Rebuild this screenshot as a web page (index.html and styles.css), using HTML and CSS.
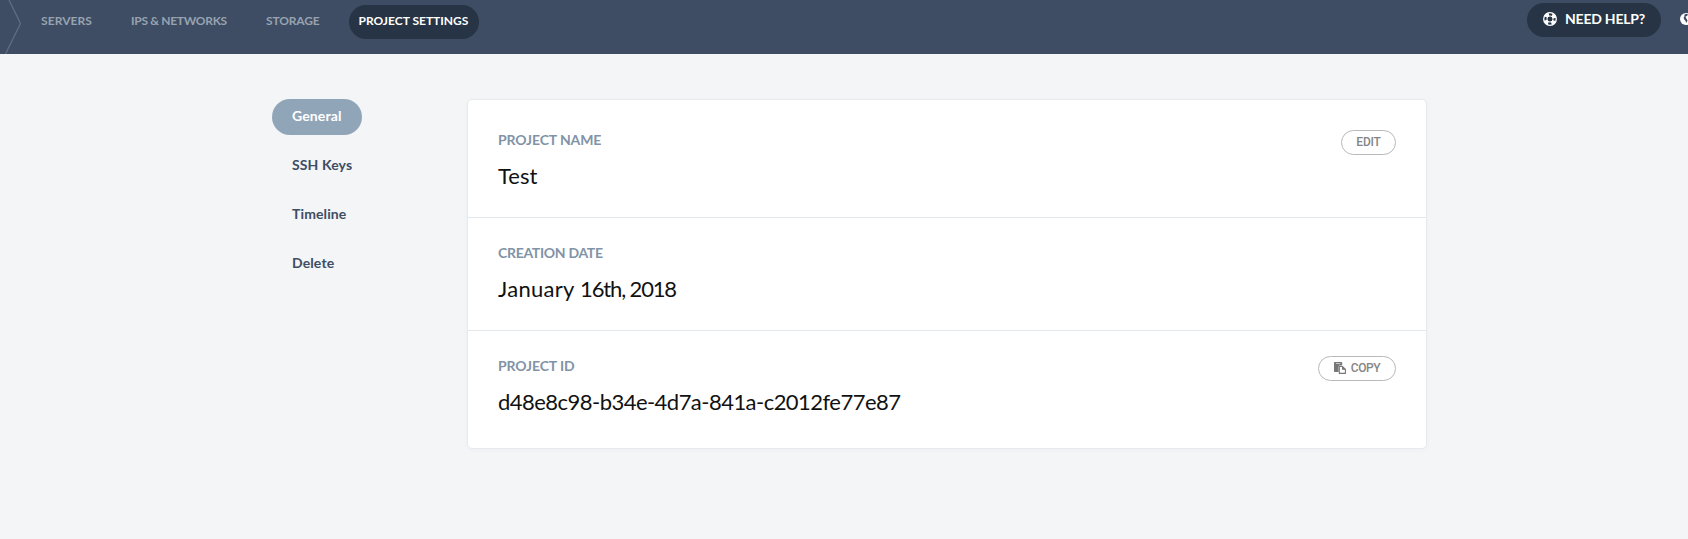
FILE: index.html
```html
<!DOCTYPE html>
<html lang="en">
<head>
<meta charset="utf-8">
<title>Project Settings</title>
<link rel="stylesheet" href="styles.css">
</head>
<body>
<header class="topbar">
  <svg class="chevron" width="22" height="54" viewBox="0 0 22 54"><path d="M9 0L20.500 23.500L5.500 54" fill="none" stroke="#5f6d81" stroke-width="1.300"/></svg>
  <nav class="nav">
    <a class="nav-item servers">SERVERS</a>
    <a class="nav-item networks">IPS &amp; NETWORKS</a>
    <a class="nav-item storage">STORAGE</a>
    <a class="nav-item active">PROJECT SETTINGS</a>
  </nav>
  <a class="help">
    <svg width="14" height="14" viewBox="0 0 14 14"><circle cx="7" cy="7" r="6.300" fill="none" stroke="#fff" stroke-width="1.300"/><circle cx="7" cy="7" r="4.700" fill="none" stroke="#fff" stroke-width="3.800" stroke-dasharray="4 3.383" stroke-dashoffset="-1.691"/><circle cx="7" cy="7" r="3.100" fill="none" stroke="#fff" stroke-width="1"/></svg>
    <span>NEED HELP?</span>
  </a>
  <svg class="globe" width="12" height="12" viewBox="0 0 12 12"><circle cx="6" cy="6" r="6" fill="#fff"/><path d="M4.500 1.500L6.500 .8L8 1.500L7 3L5.500 3.600L6 5L7.600 7.600L6.200 10L5.600 8L4.200 6.400L3.600 4.600L4.400 3.600Z" fill="#3e4d63"/></svg>
</header>
<main class="page">
  <aside class="side">
    <a class="side-item selected">General</a>
    <a class="side-item">SSH Keys</a>
    <a class="side-item">Timeline</a>
    <a class="side-item">Delete</a>
  </aside>
  <section class="card">
    <div class="row">
      <div><h2 class="label">PROJECT NAME</h2><p class="value">Test</p></div>
      <button class="btn">EDIT</button>
    </div>
    <div class="row">
      <div><h2 class="label created">CREATION DATE</h2><p class="value date"><span class="month">January </span>16th, 2018</p></div>
    </div>
    <div class="row">
      <div><h2 class="label">PROJECT ID</h2><p class="value uuid">d48e8c98-b34e-4d7a-841a-c2012fe77e87</p></div>
      <button class="btn copy"><svg width="12" height="12" viewBox="0 0 12 12"><path d="M.7 0H7.500Q8.200 0 8.200 .7V3.400H5.600Q4.600 3.400 4.600 4.400V10H.7Q0 10 0 9.300V.7Q0 0 .7 0Z" fill="#777"/><path d="M2 1.500H6.300" stroke="#fff" stroke-width=".6"/><path d="M5.300 4.500H8.500L11.400 7.300V11.400H5.300Z" fill="#fff" stroke="#777" stroke-width="1.100"/><path d="M8 4V7.800H11.900Z" fill="#777"/></svg><span>COPY</span></button>
    </div>
  </section>
</main>
</body>
</html>
```
FILE: styles.css
```css
* { box-sizing: border-box; }
body {
  margin: 0;
  height: 539px;
  overflow: hidden;
  background: #f3f5f7;
  font-family: Lato, "Open Sans", sans-serif;
}
.topbar {
  display: flex;
  align-items: flex-start;
  height: 54px;
  overflow: hidden;
  background: #3e4d63;
}
.chevron { flex: none; }
.nav { display: flex; flex: 1; padding: 5px 0 0 9px; }
.nav-item {
  height: 34px;
  padding: 0 10px;
  border-radius: 17px;
  color: #97a3b1;
  font-size: 12px;
  font-weight: 700;
  line-height: 32px;
  white-space: nowrap;
}
.servers { width: 90px; letter-spacing: .08px; }
.networks { width: 135px; letter-spacing: -.3px; }
.storage { width: 93px; letter-spacing: -.15px; }
.active { width: 130px; padding-left: 9.500px; background: #263445; color: #fff; }
.help {
  display: flex;
  gap: 8px;
  width: 134px;
  height: 34px;
  margin-top: 3px;
  padding-left: 16px;
  border-radius: 17px;
  background: #263445;
  color: #fff;
  font-size: 14px;
  font-weight: 700;
  letter-spacing: -.22px;
  line-height: 32px;
  white-space: nowrap;
}
.help svg { flex: none; margin-top: 9px; }
.globe { flex: none; margin: 13px -4px 0 19px; }
.page {
  display: flex;
  align-items: flex-start;
  padding: 45px 0 0 272px;
}
.side {
  display: flex;
  flex-direction: column;
  align-items: flex-start;
  gap: 13px;
  width: 195px;
}
.side-item {
  height: 36px;
  padding: 0 20px;
  border-radius: 18px;
  color: #3e4d63;
  font-size: 14px;
  font-weight: 700;
  letter-spacing: .12px;
  line-height: 33px;
  white-space: nowrap;
}
.selected { width: 90px; background: #91a5b9; color: #fff; }
.card {
  width: 960px;
  height: 350px;
  border: 1px solid #e6eaee;
  border-radius: 5px;
  background: #fff;
  box-shadow: 0 1px 5px rgba(100, 120, 140, .04);
}
.row {
  display: flex;
  justify-content: space-between;
  align-items: flex-start;
  height: 113px;
  padding: 30px 30px 0;
}
.row:first-child { height: 117px; }
.row + .row { border-top: 1px solid #e3e8ec; padding-top: 25px; }
.label {
  margin: -1px 0 0;
  color: #8193a6;
  font-size: 14px;
  font-weight: 700;
  letter-spacing: -.12px;
  line-height: 22px;
  white-space: nowrap;
}
.created { letter-spacing: -.3px; }
.value {
  margin: 11px 0 0;
  color: #111;
  font-size: 22px;
  font-weight: 400;
  line-height: 28px;
  white-space: nowrap;
}
.date { letter-spacing: -1.15px; }
.month { letter-spacing: .3px; }
.uuid { letter-spacing: -.53px; }
.btn {
  display: flex;
  justify-content: center;
  width: 55px;
  height: 25px;
  padding: 0;
  border: 1px solid #b9b9b9;
  border-radius: 13px;
  background: #fff;
  color: #858585;
  font: 500 12px/23px Roboto, sans-serif;
  letter-spacing: -.2px;
}
.copy { gap: 5px; width: 78px; letter-spacing: -.4px; }
.copy svg { margin-top: 5px; }
```
